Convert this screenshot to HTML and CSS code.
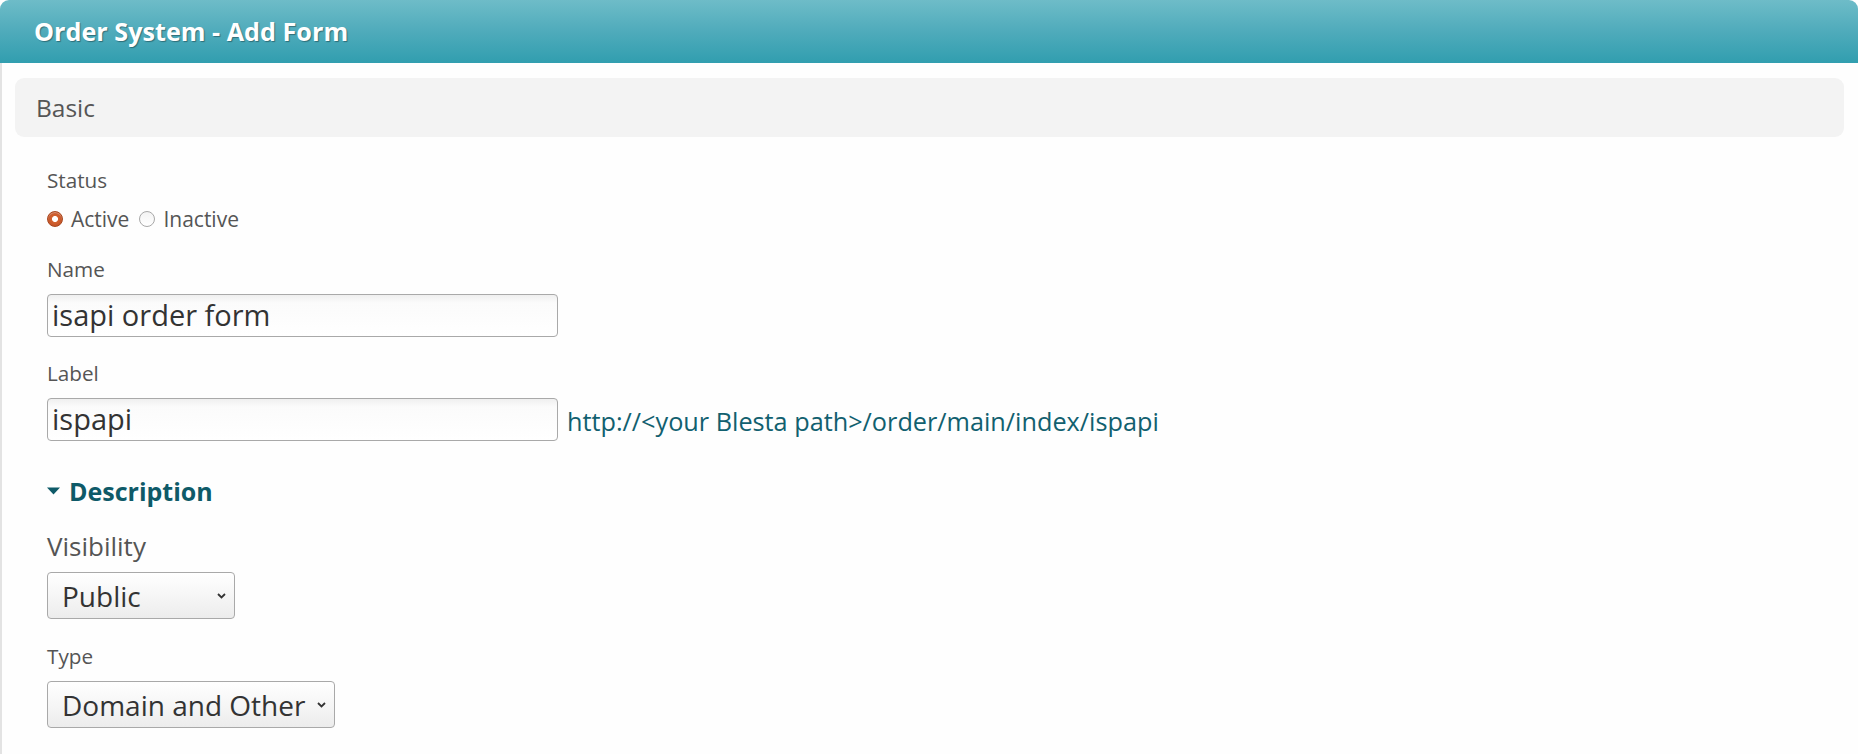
FILE: index.html
```html
<!DOCTYPE html>
<html>
<head>
<meta charset="utf-8">
<title>Order System - Add Form</title>
<link rel="stylesheet" href="styles.css">
</head>
<body>
<div class="panel">
  <div class="panel-head"><h1 class="panel-title">Order System - Add Form</h1></div>
  <div class="panel-body">
    <div class="section-bar">Basic</div>
    <div class="form">
      <div class="label lbl-status">Status</div>
      <div class="radio-row">
        <span class="radio radio-on"></span><span class="radio-text">Active</span>
        <span class="radio radio-off"></span><span class="radio-text">Inactive</span>
      </div>
      <div class="label lbl-name">Name</div>
      <div class="input">isapi order form</div>
      <div class="label lbl-label">Label</div>
      <div class="input-row">
        <div class="input">ispapi</div>
        <span class="hint">http://&lt;your Blesta path&gt;/order/main/index/ispapi</span>
      </div>
      <div class="toggle">
        <svg class="caret" width="13" height="8" viewBox="0 0 13 8"><path d="M0 0.5 L13 0.5 L6.5 7.5 Z" fill="#0e5a68"/></svg>
        <span>Description</span>
      </div>
      <div class="label lbl-vis">Visibility</div>
      <div class="select sel-vis"><span class="sel-text">Public</span><svg class="chev" width="9" height="6" viewBox="0 0 9 6"><path d="M1 1 L4.5 4.5 L8 1" fill="none" stroke="#333" stroke-width="1.8"/></svg></div>
      <div class="label lbl-type">Type</div>
      <div class="select sel-type"><span class="sel-text">Domain and Other</span><svg class="chev" width="9" height="6" viewBox="0 0 9 6"><path d="M1 1 L4.5 4.5 L8 1" fill="none" stroke="#333" stroke-width="1.8"/></svg></div>
    </div>
  </div>
</div>
</body>
</html>
```
FILE: styles.css
```css
html, body {
  margin: 0;
  padding: 0;
  background: #ffffff;
}
body {
  font-family: "Open Sans", "Noto Sans", sans-serif;
  color: #555555;
  width: 1858px;
  height: 754px;
  overflow: hidden;
}
.panel {
  display: flex;
  flex-direction: column;
  height: 754px;
}
.panel-head {
  height: 63px;
  border-radius: 9px 9px 0 0;
  background: linear-gradient(to bottom, #6ebcc8 0%, #4fabbb 50%, #319eaf 100%);
  display: flex;
  align-items: center;
  padding-left: 34px;
  flex-shrink: 0;
}
.panel-title {
  margin: 0;
  font-size: 25.2px;
  font-weight: 700;
  color: #ffffff;
  text-shadow: 1px 1px 1px rgba(0, 0, 0, 0.35);
  line-height: 30px;
  position: relative;
  top: -1px;
}
.panel-body {
  flex: 1;
  border-left: 2px solid #e3e3e3;
  background: #fefefe;
}
.section-bar {
  margin: 15px 14px 0 13px;
  height: 59px;
  background: #f3f3f3;
  border-radius: 9px;
  display: flex;
  align-items: center;
  padding-left: 21px;
  font-size: 24.5px;
  color: #555555;
}
.form {
  padding-left: 45px;
  display: flex;
  flex-direction: column;
  align-items: flex-start;
}
.label {
  font-size: 20.7px;
  line-height: 24px;
  color: #555555;
}
.lbl-status { margin-top: 31px; }
.lbl-name { margin-top: 26px; }
.lbl-label { margin-top: 24px; }
.lbl-vis {
  margin-top: 25px;
  font-size: 26px;
  line-height: 30px;
}
.lbl-type { margin-top: 25px; }
.radio-row {
  margin-top: 15px;
  height: 24px;
  display: flex;
  align-items: center;
  font-size: 21px;
  color: #555555;
}
.radio {
  display: inline-block;
  box-sizing: border-box;
  border-radius: 50%;
}
.radio-on {
  width: 16px;
  height: 16px;
  background: radial-gradient(circle at center, #ffffff 0, #ffffff 2.6px, #d2622f 3.4px, #c9582a 60%, #b14a20 100%);
  border: 1px solid #a9461d;
  box-shadow: inset 0 1px 1px rgba(255, 255, 255, 0.4);
}
.radio-off {
  width: 16px;
  height: 16px;
  background: linear-gradient(to bottom, #f3f3f3, #ffffff);
  border: 1px solid #a8a8a8;
  margin-left: 10px;
}
.radio-text {
  margin-left: 8px;
}
.input {
  margin-top: 13px;
  box-sizing: border-box;
  width: 511px;
  height: 43px;
  border: 1px solid #a9a9a9;
  border-radius: 4px;
  background: linear-gradient(to bottom, #efefef 0, #fbfbfb 8px, #ffffff 100%);
  font-size: 29px;
  color: #333333;
  padding-left: 4px;
  line-height: 40px;
}
.input-row {
  display: flex;
  align-items: flex-end;
}
.hint {
  font-size: 25.25px;
  color: #11606f;
  margin-left: 9px;
  line-height: 40px;
}
.toggle {
  margin-top: 35px;
  display: flex;
  align-items: center;
  font-size: 25px;
  font-weight: 700;
  color: #0e5a68;
  line-height: 30px;
}
.caret {
  margin-right: 9px;
}
.select {
  box-sizing: border-box;
  height: 47px;
  border: 1px solid #a9a9a9;
  border-radius: 4px;
  background: linear-gradient(to bottom, #ffffff 0%, #f6f6f6 50%, #ececec 100%);
  display: flex;
  align-items: center;
  padding-left: 14px;
  padding-right: 8px;
  font-size: 28px;
  color: #333333;
}
.sel-vis {
  margin-top: 11px;
  width: 188px;
  justify-content: space-between;
}
.sel-type {
  margin-top: 13px;
  width: 288px;
  justify-content: space-between;
}
.sel-text {
  line-height: 40px;
}
.chev {
  flex-shrink: 0;
}
```
